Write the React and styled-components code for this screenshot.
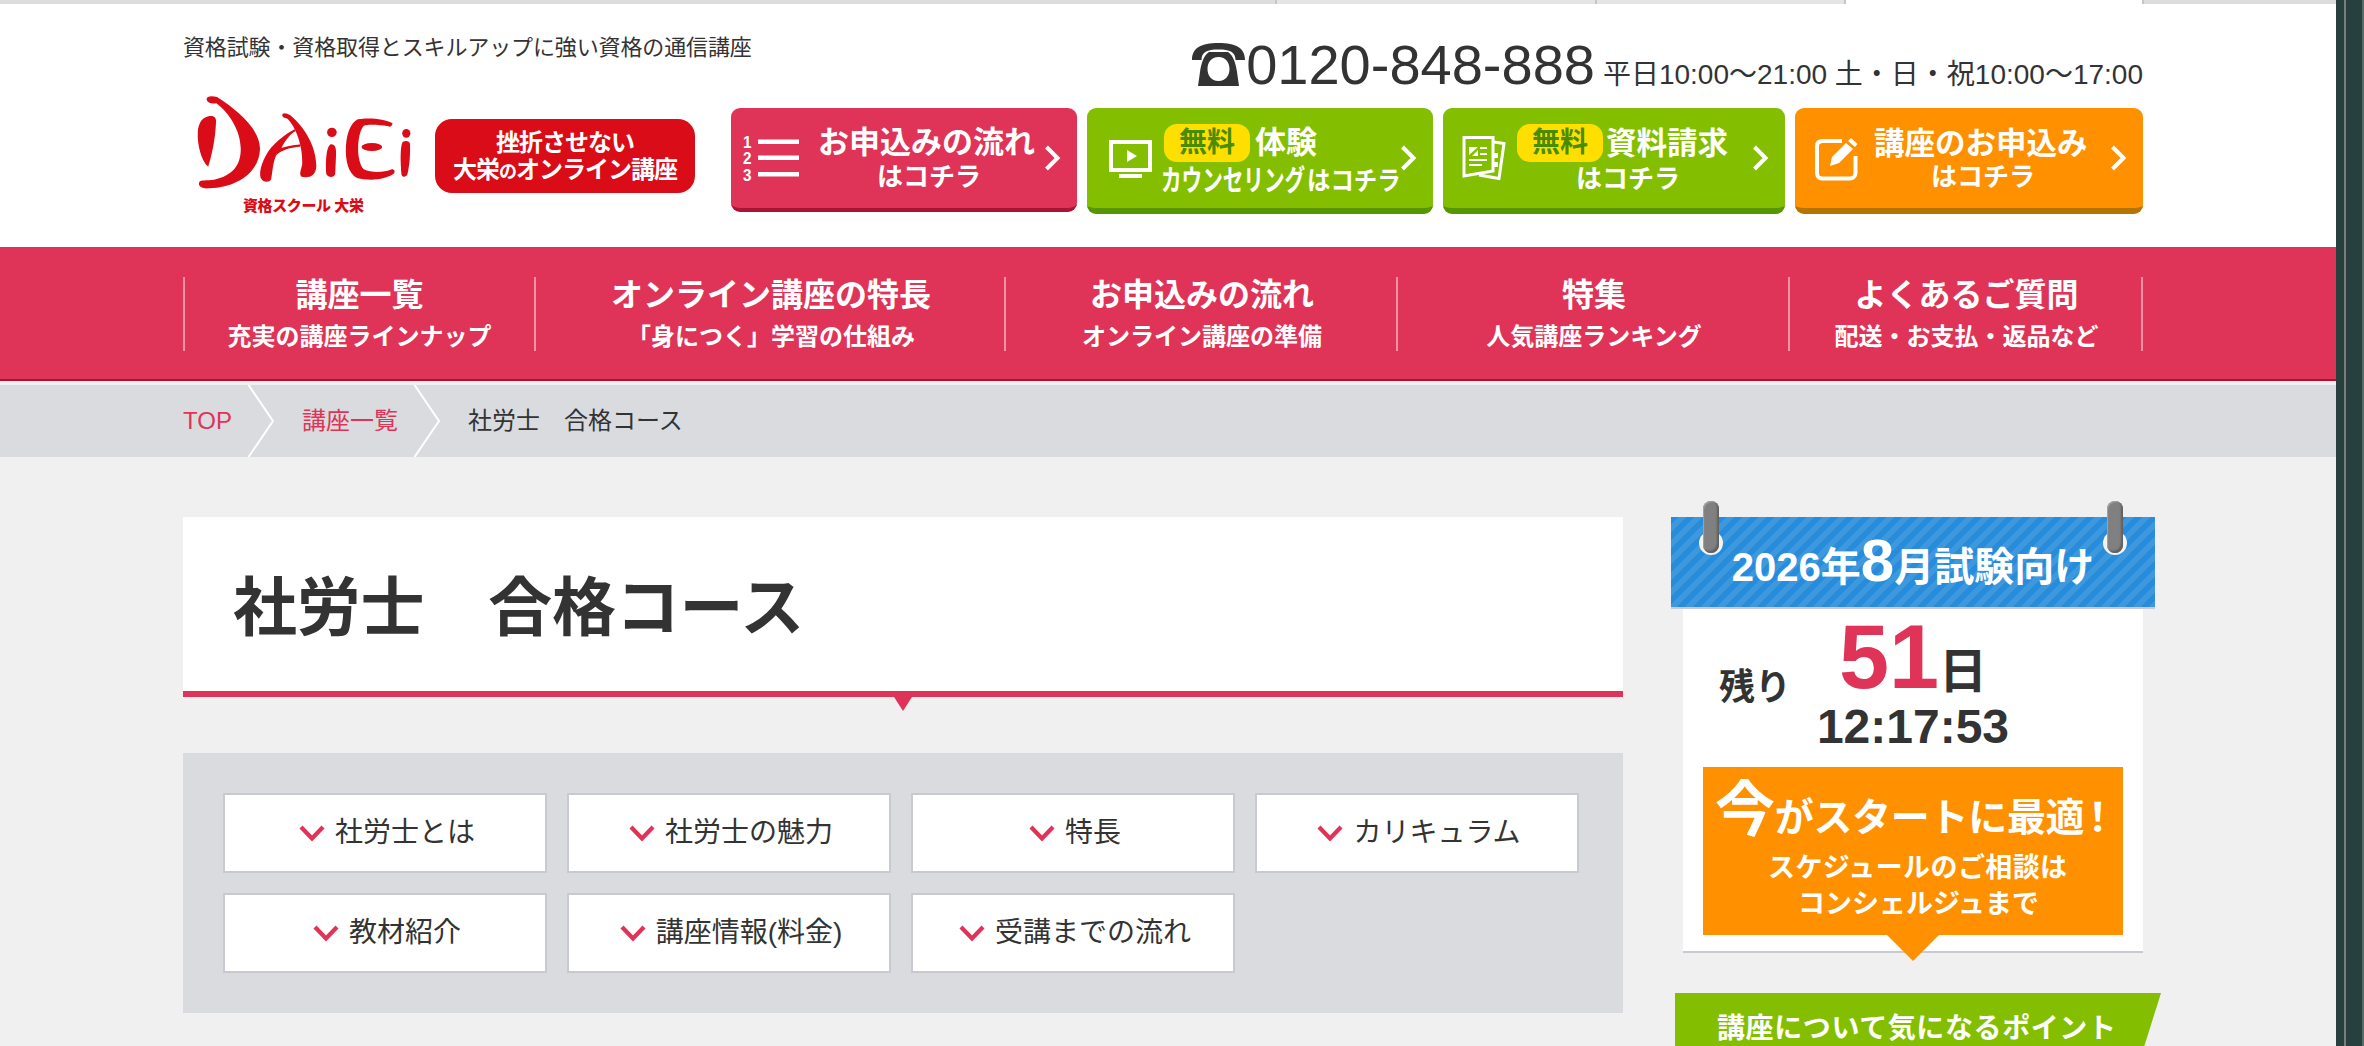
import React from 'react'
import styled, { createGlobalStyle, css } from 'styled-components'

const GlobalStyle = createGlobalStyle`
* { box-sizing: border-box; }
body {
margin: 0;
background: #28403d;
overflow: hidden;
}
`

const Window = styled.div`
display: flex;
width: 2364px;
height: 1046px;
overflow: hidden;
font-family: 'Liberation Sans', 'Noto Sans CJK JP', sans-serif;
color: #333;
`

const Page = styled.div`
flex: none;
width: 2336px;
height: 1046px;
background: #f0f0f0;
overflow: hidden;
`

const WindowEdge = styled.div`
flex: none;
width: 28px;
height: 1046px;
padding-left: 8px;
background: #28403d;
`

const EdgeLine = styled.div`
width: 20px;
height: 1046px;
border-left: 2px solid #7a7d7c;
border-right: 2px solid #566c69;
`

// strip of browser tabs above the page
const TabStrip = styled.div`
display: flex;
height: 4px;
background: #ddd;
`

const Tab = styled.div`
width: ${props => props.$w}px;
background: ${props => props.$bg};
border-left: ${props => props.$line ? '2px solid #c6c6c6' : 'none'};
`

const Header = styled.header`
height: 243px;
padding: 28px 193px 0 183px;
background: #fff;
`

const HeaderTop = styled.div`
display: flex;
justify-content: space-between;
height: 76px;
`

const Tagline = styled.p`
margin: 0;
font-size: 22px;
line-height: 32px;
letter-spacing: -0.13px;
white-space: nowrap;
`

const Phone = styled.p`
display: flex;
align-items: baseline;
margin: -3px 0 0;
height: 72px;
line-height: 72px;
font-size: 56px;
white-space: nowrap;
svg { align-self: flex-start; margin: 14px 1px 0 0; }
`

const Hours = styled.span`
margin-left: 8px;
font-size: 28px;
`

const HeaderMain = styled.div`
display: flex;
align-items: flex-start;
`

const Logo = styled.div`
display: flex;
flex-direction: column;
width: 252px;
height: 130px;
margin-top: -16px;
`

const LogoCaption = styled.span`
margin: 1px 0 0 60px;
color: #da0c17;
font-size: 15px;
font-weight: 900;
line-height: 18px;
letter-spacing: -0.4px;
white-space: nowrap;
`

const Slogan = styled.div`
width: 260px;
height: 74px;
margin: 11px 36px 0 0;
padding-top: 10px;
border-radius: 17px;
background: #da0c17;
color: #fff;
font-size: 24px;
font-weight: 700;
line-height: 27px;
letter-spacing: -1px;
text-align: center;
white-space: nowrap;
small { font-size: 18px; }
`

const Actions = styled.div`
display: flex;
gap: 10px;
`

const ActionButton = styled.a`
display: flex;
align-items: flex-start;
width: ${props => props.$w}px;
height: ${props => 100 + props.$depth}px;
border-radius: 9px;
border-bottom: ${props => props.$depth}px solid ${props => props.$shade};
background: ${props => props.$bg};
color: #fff;
`

const ActionIcon = styled.svg`
flex: none;
overflow: visible;
margin: ${props => props.$top}px ${props => props.$right}px 0 ${props => props.$left}px;
`

const ActionLabel = styled.div`
padding-top: 16px;
`

const ActionLine = styled.div`
display: flex;
align-items: center;
height: 38px;
margin-left: ${props => props.$left || 0}px;
margin-top: ${props => props.$top || 0}px;
`

const Word = styled.span`
display: block;
width: ${props => props.$w}px;
font-size: ${props => props.$size}px;
font-weight: 700;
line-height: 36px;
white-space: nowrap;
transform-origin: left center;
transform: scaleX(${props => props.$squeeze || 1});
`

const FreeBadge = styled.span`
width: 86px;
height: 38px;
margin-right: ${props => props.$gap}px;
border-radius: 13px;
background: #ffdf00;
color: #4a8c00;
font-size: 28px;
font-weight: 700;
line-height: 37px;
text-align: center;
`

const ActionArrow = styled.svg`
flex: none;
margin: 37px 16px 0 auto;
`

const Nav = styled.nav`
display: flex;
height: 134px;
padding: 30px 183px;
background: #df3457;
border-bottom: 2px solid #ab1432;
`

const NavItem = styled.a`
width: ${props => props.$w}px;
height: 74px;
padding-left: 2px;
border-right: 2px solid #eb92a4;
color: #fff;
font-weight: 700;
text-align: center;
white-space: nowrap;
${props => props.$first && css`
padding-left: 0;
border-left: 2px solid #eb92a4;
`}
`

const NavTitle = styled.div`
height: 36px;
font-size: 32px;
line-height: 36px;
`

const NavText = styled.div`
margin-top: 6px;
font-size: 24px;
line-height: 35px;
`

const Breadcrumb = styled.div`
display: flex;
align-items: center;
height: 72px;
margin-top: 4px;
padding-left: 183px;
background: #dadbdf;
font-size: 24px;
line-height: 36px;
white-space: nowrap;
`

const Crumb = styled.span`
height: 36px;
margin-top: -1px;
color: ${props => props.$link ? '#df3457' : '#333'};
`

const CrumbArrow = styled.svg`
margin: 0 28px 0 16px;
`

const Content = styled.div`
display: flex;
align-items: flex-start;
padding: 60px 0 0 183px;
`

const Main = styled.main`
width: 1440px;
`

const TitleBox = styled.div`
position: relative;
height: 180px;
padding-left: 50px;
background: #fff;
border-bottom: 6px solid #df3457;
&:after {
content: '';
position: absolute;
top: 180px;
left: 711px;
border: 9px solid transparent;
border-top: 14px solid #df3457;
border-bottom: 0;
}
`

const Title = styled.h1`
margin: 0;
font-size: 64px;
line-height: 182px;
height: 174px;
font-weight: 700;
letter-spacing: -0.2px;
white-space: nowrap;
`

const AnchorBox = styled.div`
display: grid;
grid-template-columns: repeat(4, 324px);
grid-auto-rows: 80px;
gap: 20px;
height: 260px;
margin-top: 56px;
padding: 40px;
background: #dadbdf;
`

const Anchor = styled.a`
display: flex;
align-items: center;
justify-content: center;
gap: 10px;
padding-left: 4px;
background: #fff;
border: 2px solid #c9c9d2;
font-size: 28px;
line-height: 40px;
white-space: nowrap;
`

const AnchorText = styled.span`
margin-top: -1px;
`

const Side = styled.aside`
width: 490px;
margin-left: 48px;
`

const ExamHead = styled.div`
position: relative;
width: 484px;
height: 92px;
padding-top: 14px;
border-bottom: 2px solid #c9c9d2;
background: repeating-linear-gradient(135deg, #278cdb 0, #278cdb 5.6px, #3d98de 5.6px, #3d98de 11.3px);
color: #fff;
font-size: 40px;
font-weight: 700;
line-height: 72px;
text-align: center;
white-space: nowrap;
strong { font-size: 60px; line-height: 60px; }
`

const Ring = styled.i`
position: absolute;
top: -16px;
left: ${props => props.$left}px;
width: 16px;
height: 52px;
border-radius: 8px;
background: #808080;
box-shadow: inset -2px -2px 2px #5f5f5f, inset 1px 1px 1px #a4a4a4;
`

const RingHole = styled.i`
position: absolute;
top: 14px;
left: ${props => props.$left}px;
width: 24px;
height: 24px;
border-radius: 12px;
background: #f3f3f3;
`

const ExamBody = styled.div`
width: 460px;
height: 344px;
margin-left: 12px;
padding: 0 20px;
background: #fff;
border-bottom: 2px solid #c9c9d2;
font-weight: 700;
white-space: nowrap;
`

const CountRow = styled.div`
display: grid;
grid-template-columns: 98px 224px 98px;
height: 158px;
`

const Remain = styled.span`
padding: 59px 0 0 16px;
font-size: 36px;
line-height: 40px;
`

const Count = styled.div`
text-align: center;
font-size: 48px;
line-height: 56px;
`

const Days = styled.div`
height: 90px;
line-height: 96px;
strong { color: #df3457; font-size: 90px; }
`

const StartBox = styled.div`
position: relative;
width: 420px;
height: 168px;
background: #ff9100;
color: #fff;
&:after {
content: '';
position: absolute;
top: 168px;
left: 184px;
border: 26px solid transparent;
border-top-color: #ff9100;
border-bottom: 0;
}
`

const StartLead = styled.div`
height: 83px;
padding: 11px 0 0 12px;
font-size: 39px;
line-height: 66px;
letter-spacing: -0.3px;
big { font-size: 60px; }
span { margin-left: -6px; }
`

const StartLine = styled.div`
margin-left: ${props => props.$left}px;
font-size: 27px;
line-height: 36px;
letter-spacing: ${props => props.$gap || 0}px;
`

const PointHead = styled.div`
width: 486px;
height: 70px;
margin: 40px 0 0 4px;
padding: 15px 0 0 42px;
background: #83bf00;
clip-path: polygon(0 0, 100% 0, 464px 100%, 0 100%);
color: #fff;
font-size: 28px;
font-weight: 700;
line-height: 42px;
letter-spacing: 0.6px;
white-space: nowrap;
`

const DaieiMark = () => (
  <svg width="237" height="104" viewBox="60 276 640 312" preserveAspectRatio="none" fill="#da0c17">
    <path d="M124 300C122 290 134 285 152 291C206 330 267 385 268 446C266 515 210 562 130 565C108 567 100 557 104 546C108 538 122 543 144 539C196 526 216 494 216 446C215 392 186 340 150 310C138 312 128 310 124 300Z" />
    <path d="M129 349C142 345 152 352 149 370C147 420 137 470 128 500C108 482 98 430 100 396C102 368 112 353 129 349Z" />
    <path d="M328 346C328 338 338 338 350 346C390 384 420 440 420 500C418 528 400 535 380 530C372 522 380 508 382 492C384 436 364 380 342 356C334 354 328 352 328 346Z" />
    <path d="M362 388C340 400 300 430 282 470C270 495 264 525 272 538C278 548 294 548 298 538C302 515 302 490 312 465C326 450 350 442 376 440L378 433C354 436 336 440 326 444C336 420 350 402 364 393Z" />
    <ellipse cx="462" cy="397" rx="13" ry="14" />
    <path d="M459 433C471 432 475 444 473 472L471 522C468 534 452 534 447 522C445 490 446 440 459 433Z" />
    <path d="M626 370C624 380 620 382 614 379C590 374 560 373 548 377C530 400 526 480 548 508C570 520 602 518 624 508C632 508 634 516 628 522C600 542 560 542 530 534C506 520 498 480 500 440C502 400 512 370 532 358C560 352 606 356 626 370Z" />
    <ellipse cx="570" cy="441" rx="28" ry="12" />
    <ellipse cx="663" cy="400" rx="11" ry="13" />
    <path d="M653 426C662 421 672 423 673 432C674 460 672 500 665 526C660 532 653 532 650 524C647 490 646 440 653 426Z" />
  </svg>
)

const PhoneIcon = () => (
  <svg width="53" height="43" viewBox="0 0 53 43" fill="#333">
    <path d="M0 17C0 5 9 0 26.500 0S53 5 53 17H43.500C43.500 9 38 6.500 26.500 6.500S9.500 9 9.500 17Z" />
    <path fillRule="evenodd" d="M17 9H36C42 13 44 22 45 29L47 43H6L8 29C9 22 11 13 17 9ZM26.500 14C19 14 15.500 20 15.500 26S19 38 26.500 38S37.500 32 37.500 26S34 14 26.500 14Z" />
  </svg>
)

const StepsIcon = () => (
  <ActionIcon $top={26} $left={12} $right={19} width="56" height="50" viewBox="0 0 56 50" fill="#fff">
    <g fontFamily="Liberation Sans" fontSize="17" fontWeight="700" transform="scale(0.9 1)">
      <text x="0" y="14">1</text>
      <text x="0" y="30.500">2</text>
      <text x="0" y="47">3</text>
    </g>
    <path d="M15 5.500H56V10H15ZM15 21.500H56V26H15ZM15 38H56V42.500H15Z" />
  </ActionIcon>
)

const MonitorIcon = () => (
  <ActionIcon $top={32} $left={22} $right={9} width="43" height="39" viewBox="0 0 43 39">
    <path d="M2 2H41V30H2Z" fill="none" stroke="#fff" strokeWidth="4" />
    <path d="M18 10L28 16L18 22ZM10 34H33V38H10Z" fill="#fff" />
  </ActionIcon>
)

const PapersIcon = () => (
  <ActionIcon $top={27} $left={19} $right={11} width="44" height="46" viewBox="0 0 44 46" fill="none" stroke="#fff" strokeWidth="3">
    <path d="M2 2.500H31V36L2 41Z" />
    <path d="M32 7L42 8.500L37 43.500L17 40" />
    <path d="M18 13H25M18 19H25M7 25H25M7 30H20" strokeWidth="2" />
    <path d="M7 12H16L7 20ZM16 15V21H10Z" fill="#fff" stroke="none" />
    <path d="M34 18V23M34 27V32" strokeWidth="4" />
  </ActionIcon>
)

const EditIcon = () => (
  <ActionIcon $top={29} $left={20} $right={16} width="43" height="44" viewBox="0 0 43 44">
    <path d="M27 4H8C4 4 2 6 2 9V36C2 39 4 41.500 7 41.500H35C38 41.500 40.500 39 40.500 36V19" fill="none" stroke="#fff" strokeWidth="4" />
    <path d="M31 6L38 12L24 26L15 29L17 20ZM33 4L36 1L42.500 7L40 10Z" fill="#fff" />
  </ActionIcon>
)

const Arrow = () => (
  <ActionArrow width="17" height="26" viewBox="0 0 17 26">
    <path d="M2.500 2L13.500 13L2.500 24" fill="none" stroke="#fff" strokeWidth="4" />
  </ActionArrow>
)

const CrumbSep = () => (
  <CrumbArrow width="26" height="72" viewBox="0 0 26 72">
    <path d="M0.500 0L25 36L0.500 72" fill="none" stroke="#fff" strokeWidth="2" />
  </CrumbArrow>
)

const DownArrow = () => (
  <svg width="26" height="17" viewBox="0 0 26 17">
    <path d="M2 2L13 13.500L24 2" fill="none" stroke="#df3457" strokeWidth="4.200" />
  </svg>
)

const navItems = [
  { w: 353, title: '講座一覧', text: '充実の講座ラインナップ' },
  { w: 470, title: 'オンライン講座の特長', text: '「身につく」学習の仕組み' },
  { w: 392, title: 'お申込みの流れ', text: 'オンライン講座の準備' },
  { w: 392, title: '特集', text: '人気講座ランキング' },
  { w: 353, title: 'よくあるご質問', text: '配送・お支払・返品など' },
]

const anchors = ['社労士とは', '社労士の魅力', '特長', 'カリキュラム', '教材紹介', '講座情報(料金)', '受講までの流れ']

const App = () => {
  return (
    <Window>
      <GlobalStyle />
      <Page>
        <TabStrip>
          <Tab $w={1275} $bg="#ddd" />
          <Tab $w={320} $bg="#e5e5e5" $line />
          <Tab $w={249} $bg="#e5e5e5" $line />
          <Tab $w={298} $bg="#fff" $line />
          <Tab $w={194} $bg="#ddd" $line />
        </TabStrip>
        <Header>
          <HeaderTop>
            <Tagline>資格試験・資格取得とスキルアップに強い資格の通信講座</Tagline>
            <Phone>
              <PhoneIcon />0120-848-888
              <Hours>平日10:00～21:00 土・日・祝10:00～17:00</Hours>
            </Phone>
          </HeaderTop>
          <HeaderMain>
            <Logo>
              <DaieiMark />
              <LogoCaption>資格スクール 大栄</LogoCaption>
            </Logo>
            <Slogan>
              挫折させない<br />
              大栄<small>の</small>オンライン講座
            </Slogan>
            <Actions>
              <ActionButton $w={346} $depth={4} $bg="#df3457" $shade="#ab1432">
                <StepsIcon />
                <ActionLabel>
                  <ActionLine><Word $w={220} $size={31}>お申込みの流れ</Word></ActionLine>
                  <ActionLine $left={59} $top={-4}><Word $w={104} $size={26}>はコチラ</Word></ActionLine>
                </ActionLabel>
                <Arrow />
              </ActionButton>
              <ActionButton $w={346} $depth={6} $bg="#83bf00" $shade="#569600">
                <MonitorIcon />
                <ActionLabel>
                  <ActionLine $left={3}><FreeBadge $gap={5}>無料</FreeBadge><Word $w={62} $size={31}>体験</Word></ActionLine>
                  <ActionLine>
                    <Word $w={146} $size={29} $squeeze={0.71}>カウンセリング</Word>
                    <Word $w={92} $size={26} $squeeze={0.9}>はコチラ</Word>
                  </ActionLine>
                </ActionLabel>
                <Arrow />
              </ActionButton>
              <ActionButton $w={342} $depth={6} $bg="#83bf00" $shade="#569600">
                <PapersIcon />
                <ActionLabel>
                  <ActionLine><FreeBadge $gap={3}>無料</FreeBadge><Word $w={122} $size={30.5}>資料請求</Word></ActionLine>
                  <ActionLine $left={59} $top={-2}><Word $w={104} $size={26}>はコチラ</Word></ActionLine>
                </ActionLabel>
                <Arrow />
              </ActionButton>
              <ActionButton $w={348} $depth={6} $bg="#ff9100" $shade="#b37400">
                <EditIcon />
                <ActionLabel>
                  <ActionLine><Word $w={214} $size={30.5}>講座のお申込み</Word></ActionLine>
                  <ActionLine $left={57} $top={-4}><Word $w={104} $size={26}>はコチラ</Word></ActionLine>
                </ActionLabel>
                <Arrow />
              </ActionButton>
            </Actions>
          </HeaderMain>
        </Header>
        <Nav>
          {navItems.map((item, i) => (
            <NavItem key={item.title} $w={item.w} $first={i === 0}>
              <NavTitle>{item.title}</NavTitle>
              <NavText>{item.text}</NavText>
            </NavItem>
          ))}
        </Nav>
        <Breadcrumb>
          <Crumb $link>TOP</Crumb>
          <CrumbSep />
          <Crumb $link>講座一覧</Crumb>
          <CrumbSep />
          <Crumb>社労士　合格コース</Crumb>
        </Breadcrumb>
        <Content>
          <Main>
            <TitleBox>
              <Title>社労士　合格コース</Title>
            </TitleBox>
            <AnchorBox>
              {anchors.map(text => (
                <Anchor key={text}>
                  <DownArrow />
                  <AnchorText>{text}</AnchorText>
                </Anchor>
              ))}
            </AnchorBox>
          </Main>
          <Side>
            <ExamHead>
              <RingHole $left={28} />
              <RingHole $left={432} />
              <Ring $left={32} />
              <Ring $left={436} />
              2026年<strong>8</strong>月試験向け
            </ExamHead>
            <ExamBody>
              <CountRow>
                <Remain>残り</Remain>
                <Count>
                  <Days><strong>51</strong>日</Days>
                  12:17:53
                </Count>
              </CountRow>
              <StartBox>
                <StartLead><big>今</big>がスタートに最適<span>！</span></StartLead>
                <StartLine $left={65} $gap={0.4}>スケジュールのご相談は</StartLine>
                <StartLine $left={95}>コンシェルジュまで</StartLine>
              </StartBox>
            </ExamBody>
            <PointHead>講座について気になるポイント</PointHead>
          </Side>
        </Content>
      </Page>
      <WindowEdge>
        <EdgeLine />
      </WindowEdge>
    </Window>
  )
}

export default App
